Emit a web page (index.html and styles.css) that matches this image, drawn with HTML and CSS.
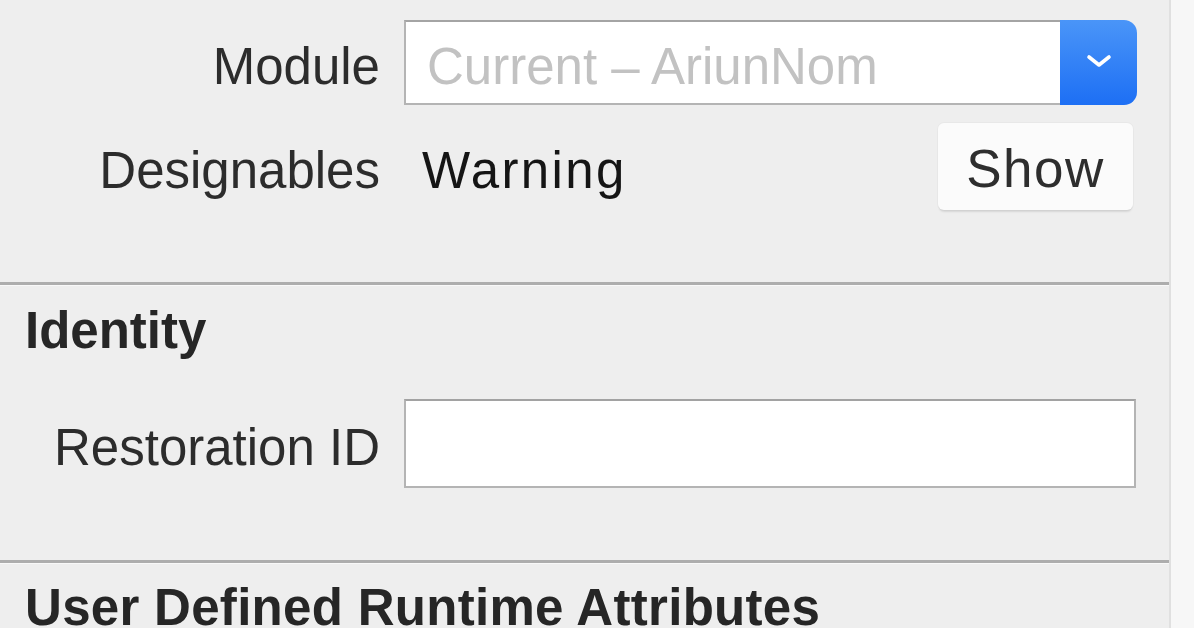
FILE: index.html
```html
<!DOCTYPE html>
<html>
<head>
<meta charset="utf-8">
<link rel="stylesheet" href="styles.css">
</head>
<body>
<div class="window">
  <div class="panel">
    <section class="section section-custom">
      <div class="row row-module">
        <div class="label">Module</div>
        <div class="select">
          <div class="select-field"><span class="placeholder">Current – AriunNom</span></div>
          <div class="select-btn">
            <svg width="28" height="16" viewBox="0 0 28 16"><path d="M4 4 L14 12 L24 4" fill="none" stroke="#ffffff" stroke-width="3.6" stroke-linecap="round" stroke-linejoin="round"/></svg>
          </div>
        </div>
      </div>
      <div class="row row-designables">
        <div class="label">Designables</div>
        <div class="control">
          <span class="value">Warning</span>
          <button class="btn-show">Show</button>
        </div>
      </div>
    </section>
    <section class="section section-identity">
      <h2 class="title">Identity</h2>
      <div class="row row-restoration">
        <div class="label">Restoration ID</div>
        <div class="textfield"></div>
      </div>
    </section>
    <section class="section section-runtime">
      <h2 class="title">User Defined Runtime Attributes</h2>
    </section>
  </div>
  <div class="strip"></div>
</div>
</body>
</html>
```
FILE: styles.css
```css
* { box-sizing: border-box; }
html, body {
  margin: 0;
  padding: 0;
  width: 1194px;
  height: 628px;
  overflow: hidden;
  background: #eeeeee;
  font-family: "Liberation Sans", Arial, sans-serif;
}
.window {
  display: flex;
  height: 628px;
}
.panel {
  width: 1171px;
  background: #eeeeee;
  border-right: 2px solid #e0e0e0;
  display: flex;
  flex-direction: column;
  overflow: hidden;
}
.strip {
  flex: 1;
  background: #f7f7f7;
}
.section {
  display: flex;
  flex-direction: column;
  flex-shrink: 0;
}
.section-custom {
  padding-top: 20px;
  height: 282px;
}
.section-identity,
.section-runtime {
  border-top: 3px solid #adadad;
  box-shadow: inset 0 1px 0 #f8f8f8;
  padding-top: 20px;
}
.section-identity {
  height: 278px;
}
.section-runtime {
  padding-top: 19px;
}
.row {
  display: flex;
  align-items: center;
}
.label {
  width: 380px;
  text-align: right;
  font-size: 51px;
  line-height: 1;
  color: #2c2c2c;
  padding-top: 8px;
  margin-right: 24px;
  flex-shrink: 0;
}
.row-module {
  height: 84px;
}
.select {
  display: flex;
  width: 733px;
  height: 85px;
}
.select-field {
  flex: 1;
  background: #ffffff;
  border: 2px solid #b4b4b4;
  border-top-color: #a4a4a4;
  border-right: 0;
  display: flex;
  align-items: center;
  padding-left: 21px;
}
.placeholder {
  font-size: 51px;
  line-height: 1;
  padding-top: 8px;
  color: #c2c2c2;
}
.select-btn {
  width: 77px;
  border-radius: 0 13px 13px 0;
  background: linear-gradient(#4a95f8, #1d6ff4);
  display: flex;
  align-items: center;
  justify-content: center;
  padding-bottom: 2px;
}
.row-designables {
  margin-top: 19px;
  height: 87px;
}
.control {
  width: 732px;
  display: flex;
  align-items: center;
  height: 100%;
  flex-shrink: 0;
}
.value {
  font-size: 51px;
  line-height: 1;
  color: #151515;
  padding-left: 18px;
  padding-top: 8px;
  letter-spacing: 2.4px;
}
.btn-show {
  margin-left: auto;
  margin-right: 3px;
  width: 195px;
  height: 87px;
  border: 0;
  border-radius: 6px;
  background: #fbfbfb;
  box-shadow: 0 3px 2px -1px rgba(0,0,0,0.10), 0 0 0 1px rgba(0,0,0,0.025);
  font-family: "Liberation Sans", Arial, sans-serif;
  font-size: 53px;
  line-height: 1;
  color: #2e2e2e;
  padding: 4px 0 0 0;
  letter-spacing: 1.5px;
}
.title {
  margin: 0;
  padding-left: 25px;
  font-size: 51px;
  line-height: 1;
  font-weight: bold;
  color: #262626;
  white-space: nowrap;
}
.row-restoration {
  margin-top: 43px;
  height: 89px;
}
.textfield {
  width: 732px;
  height: 89px;
  background: #ffffff;
  border: 2px solid #b4b4b4;
  border-top-color: #a2a2a2;
  flex-shrink: 0;
}
.section-runtime .title {
  letter-spacing: 0.3px;
}
```
